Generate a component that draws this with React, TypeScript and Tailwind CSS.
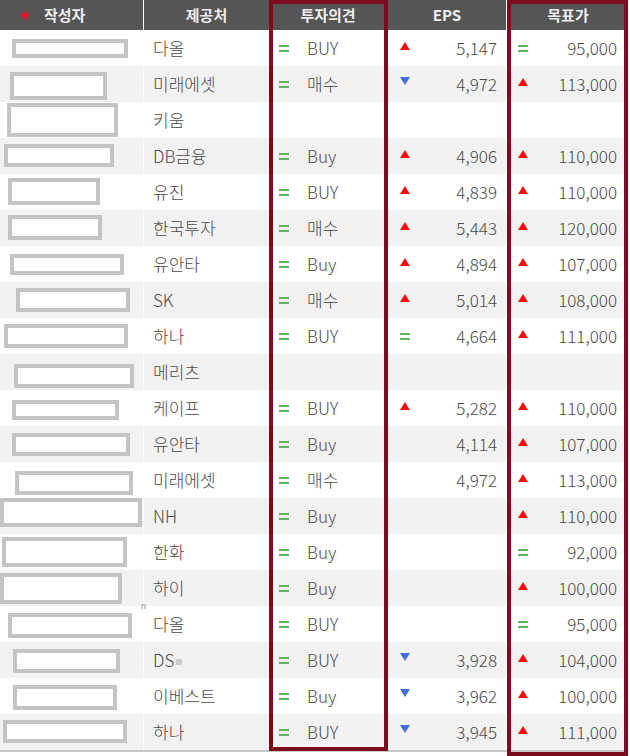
import React from "react";

type Ic = "up" | "down" | "eq" | null;
type Row = {
  box: string;
  firm: string;
  op?: string;
  epsIc?: Ic;
  eps?: string;
  tpIc?: Ic;
  tp?: string;
  extra?: boolean;
};

const rows: Row[] = [
  { box: "ml-[12px] mt-[9px] w-[116px] h-[19px]", firm: "다올", op: "BUY", epsIc: "up", eps: "5,147", tpIc: "eq", tp: "95,000" },
  { box: "ml-[10px] mt-[6px] w-[97px] h-[28px]", firm: "미래에셋", op: "매수", epsIc: "down", eps: "4,972", tpIc: "up", tp: "113,000" },
  { box: "ml-[7px] mt-[1px] w-[111px] h-[34px]", firm: "키움" },
  { box: "ml-[4px] mt-[6px] w-[110px] h-[23px]", firm: "DB금융", op: "Buy", epsIc: "up", eps: "4,906", tpIc: "up", tp: "110,000" },
  { box: "ml-[8px] mt-[4px] w-[92px] h-[27px]", firm: "유진", op: "BUY", epsIc: "up", eps: "4,839", tpIc: "up", tp: "110,000" },
  { box: "ml-[8px] mt-[5px] w-[94px] h-[25px]", firm: "한국투자", op: "매수", epsIc: "up", eps: "5,443", tpIc: "up", tp: "120,000" },
  { box: "ml-[10px] mt-[8px] w-[114px] h-[21px]", firm: "유안타", op: "Buy", epsIc: "up", eps: "4,894", tpIc: "up", tp: "107,000" },
  { box: "ml-[16px] mt-[6px] w-[114px] h-[24px]", firm: "SK", op: "매수", epsIc: "up", eps: "5,014", tpIc: "up", tp: "108,000" },
  { box: "ml-[4px] mt-[6px] w-[124px] h-[24px]", firm: "하나", op: "BUY", epsIc: "eq", eps: "4,664", tpIc: "up", tp: "111,000" },
  { box: "ml-[14px] mt-[10px] w-[120px] h-[24px]", firm: "메리츠" },
  { box: "ml-[12px] mt-[10px] w-[107px] h-[20px]", firm: "케이프", op: "BUY", epsIc: "up", eps: "5,282", tpIc: "up", tp: "110,000" },
  { box: "ml-[12px] mt-[7px] w-[118px] h-[23px]", firm: "유안타", op: "Buy", epsIc: null, eps: "4,114", tpIc: "up", tp: "107,000" },
  { box: "ml-[15px] mt-[9px] w-[118px] h-[24px]", firm: "미래에셋", op: "매수", epsIc: null, eps: "4,972", tpIc: "up", tp: "113,000" },
  { box: "ml-[0px] mt-[0px] w-[142px] h-[29px]", firm: "NH", op: "Buy", tpIc: "up", tp: "110,000" },
  { box: "ml-[2px] mt-[3px] w-[125px] h-[30px]", firm: "한화", op: "Buy", tpIc: "eq", tp: "92,000" },
  { box: "ml-[0px] mt-[3px] w-[122px] h-[31px]", firm: "하이", op: "Buy", tpIc: "up", tp: "100,000" },
  { box: "ml-[8px] mt-[7px] w-[124px] h-[25px]", firm: "다올", op: "BUY", tpIc: "eq", tp: "95,000" },
  { box: "ml-[13px] mt-[7px] w-[107px] h-[24px]", firm: "DS", op: "BUY", epsIc: "down", eps: "3,928", tpIc: "up", tp: "104,000", extra: true },
  { box: "ml-[13px] mt-[7px] w-[104px] h-[25px]", firm: "이베스트", op: "Buy", epsIc: "down", eps: "3,962", tpIc: "up", tp: "100,000" },
  { box: "ml-[3px] mt-[6px] w-[124px] h-[23px]", firm: "하나", op: "BUY", epsIc: "down", eps: "3,945", tpIc: "up", tp: "111,000" },
];

function Eq() {
  return (
    <span className="flex w-[10px] flex-col gap-[3px]">
      <span className="block h-[2px] w-[10px] bg-[#5cb85c]" />
      <span className="block h-[2px] w-[10px] bg-[#5cb85c]" />
    </span>
  );
}

function Icon({ t }: { t: Ic }) {
  if (t === "eq") return <Eq />;
  if (t === "up")
    return (
      <svg width="10" height="8" viewBox="0 0 10 8" className="mb-[5px]">
        <polygon points="5,0 10,8 0,8" fill="#ee1111" />
      </svg>
    );
  if (t === "down")
    return (
      <svg width="10" height="8" viewBox="0 0 10 8" className="mb-[6px]">
        <polygon points="0,0 10,0 5,8" fill="#3d6fe0" />
      </svg>
    );
  return <span className="w-[10px]" />;
}

const grid = "grid grid-cols-[144px_126px_118px_120px_120px]";

export default function App() {
  return (
    <div
      className="relative w-[630px] h-[756px] overflow-hidden bg-white text-[#4a4a4a]"
      style={{ fontFamily: '"Noto Sans CJK KR", "Noto Sans", sans-serif' }}
    >
      <div className="w-[628px] border-b-2 border-[#c8c8c8]">
        <div className={`${grid} h-[30px] bg-[#555555] text-[15px] font-bold text-[#eeeeee]`}>
          <div className="flex items-center gap-[14px] border-r border-white pl-[20px]">
            <svg width="10" height="10" viewBox="0 0 10 10">
              <polygon points="5,0 6.4,3.6 10,4 7.3,6.4 8.2,10 5,8 1.8,10 2.7,6.4 0,4 3.6,3.6" fill="#e8102a" />
            </svg>
            <span>작성자</span>
          </div>
          <div className="flex items-center justify-center border-r border-white">제공처</div>
          <div className="flex items-center justify-center border-r-2 border-white">투자의견</div>
          <div className="flex items-center justify-center border-r-2 border-white">EPS</div>
          <div className="flex items-center justify-center">목표가</div>
        </div>
        {rows.map((r, i) => (
          <div
            key={i}
            className={`${grid} h-[36px] text-[17px] font-light ${i % 2 === 1 ? "bg-[#f2f2f2]" : "bg-white"}`}
          >
            <div className="relative border-r border-white">
              <div className={`${r.box} border-[4px] border-[#c4c4c4] bg-white`} />
              {i === 15 && <span className="absolute right-[-3px] bottom-[-3px] h-[5px] w-[5px] bg-[#c8c8c8]" />}
            </div>
            <div className="flex items-center border-r border-white pl-[9px]">
              {r.firm}
              {r.extra && <span className="ml-[2px] mt-[3px] h-[6px] w-[6px] bg-[#cccccc]" />}
            </div>
            <div className="flex items-center border-r border-white pl-[9px]">
              {r.op && (
                <>
                  <Eq />
                  <span className="ml-[18px]">{r.op}</span>
                </>
              )}
            </div>
            <div className="flex items-center justify-between border-r-2 border-white pl-[12px] pr-[9px]">
              {r.eps ? (
                <>
                  <Icon t={r.epsIc ?? null} />
                  <span>{r.eps}</span>
                </>
              ) : null}
            </div>
            <div className="flex items-center justify-between pl-[10px] pr-[11px]">
              {r.tp ? (
                <>
                  <Icon t={r.tpIc ?? null} />
                  <span>{r.tp}</span>
                </>
              ) : null}
            </div>
          </div>
        ))}
      </div>
      <div className="pointer-events-none absolute left-[269px] top-0 h-[751px] w-[119px] border-[4px] border-[#7a0c1e]" />
      <div className="pointer-events-none absolute left-[507px] top-0 h-[756px] w-[121px] border-[4px] border-[#7a0c1e]" />
    </div>
  );
}
